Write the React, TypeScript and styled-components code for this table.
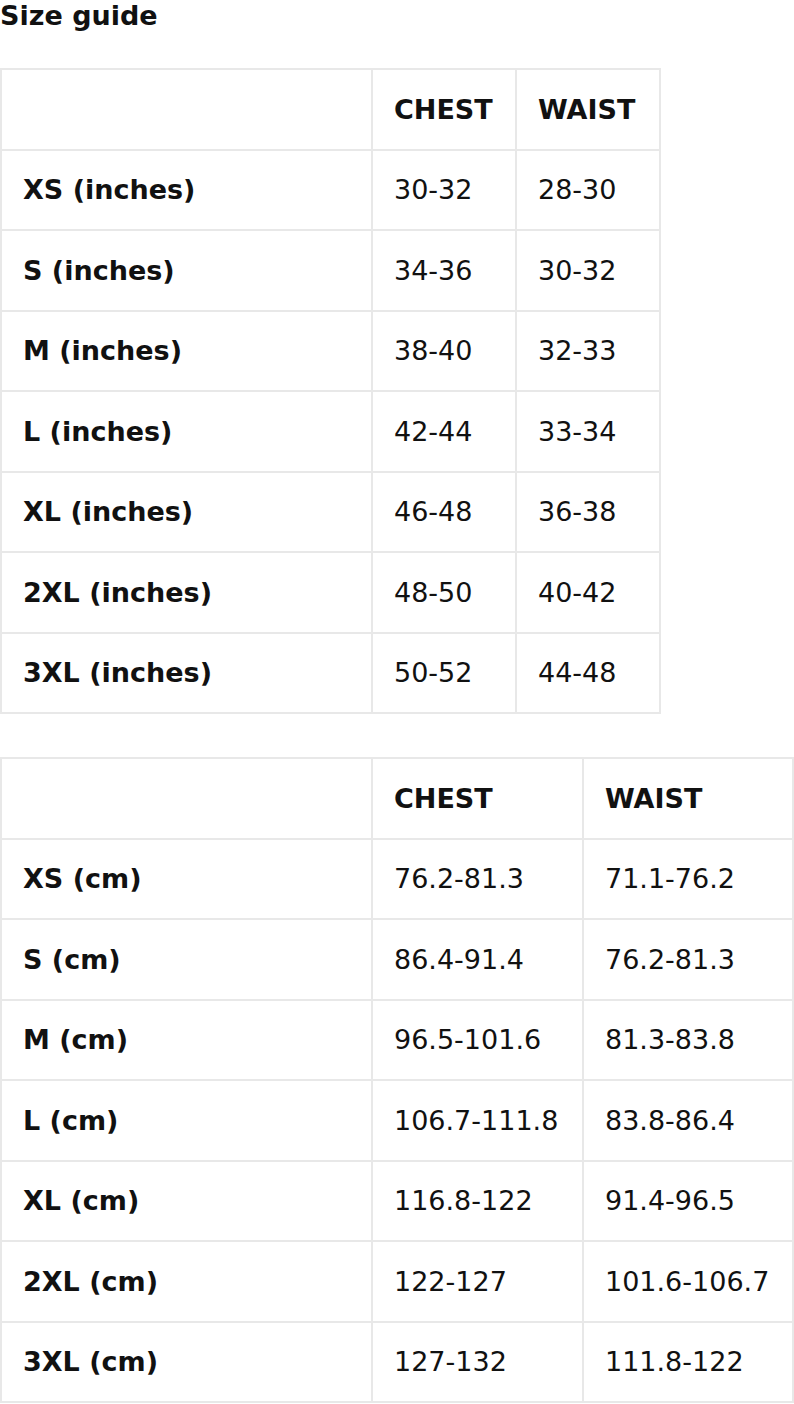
import styled, { createGlobalStyle } from "styled-components";

const GlobalStyle = createGlobalStyle`
	body {
		margin: 0;
		background: #fff;
		color: #111;
		font-family: "DejaVu Sans", "Liberation Sans", sans-serif;
	}
`;

const Page = styled.div`
	display: flex;
	flex-direction: column;
	align-items: flex-start;
`;

const Title = styled.h2`
	margin: 0 0 37px 0;
	font-size: 27px;
	font-weight: bold;
	line-height: 31px;
`;

const Table = styled.table<{ width: number }>`
	width: ${(props) => props.width}px;
	border-collapse: collapse;
	table-layout: fixed;
	font-size: 27px;
	margin-bottom: 43px;

	td,
	th {
		border: 2px solid #e8e8e8;
		padding: 0 21px;
		height: 78.5px;
		text-align: left;
		vertical-align: middle;
		white-space: nowrap;
	}

	th {
		font-weight: bold;
	}

	td {
		font-weight: normal;
	}
`;

type Row = [string, string, string];

const inches: Row[] = [
	["XS (inches)", "30-32", "28-30"],
	["S (inches)", "34-36", "30-32"],
	["M (inches)", "38-40", "32-33"],
	["L (inches)", "42-44", "33-34"],
	["XL (inches)", "46-48", "36-38"],
	["2XL (inches)", "48-50", "40-42"],
	["3XL (inches)", "50-52", "44-48"],
];

const cm: Row[] = [
	["XS (cm)", "76.2-81.3", "71.1-76.2"],
	["S (cm)", "86.4-91.4", "76.2-81.3"],
	["M (cm)", "96.5-101.6", "81.3-83.8"],
	["L (cm)", "106.7-111.8", "83.8-86.4"],
	["XL (cm)", "116.8-122", "91.4-96.5"],
	["2XL (cm)", "122-127", "101.6-106.7"],
	["3XL (cm)", "127-132", "111.8-122"],
];

const SizeTable = ({ rows, cols, width }: { rows: Row[]; cols: number[]; width: number }) => (
	<Table width={width}>
		<colgroup>
			{cols.map((c, i) => (
				<col key={i} style={{ width: c }} />
			))}
		</colgroup>
		<thead>
			<tr>
				<th></th>
				<th>CHEST</th>
				<th>WAIST</th>
			</tr>
		</thead>
		<tbody>
			{rows.map((r) => (
				<tr key={r[0]}>
					<th>{r[0]}</th>
					<td>{r[1]}</td>
					<td>{r[2]}</td>
				</tr>
			))}
		</tbody>
	</Table>
);

const App = () => {
	return (
		<Page>
			<GlobalStyle />
			<Title>Size guide</Title>
			<SizeTable rows={inches} cols={[371, 144, 144]} width={659} />
			<SizeTable rows={cm} cols={[371, 211, 210]} width={792} />
		</Page>
	);
};

export default App;
